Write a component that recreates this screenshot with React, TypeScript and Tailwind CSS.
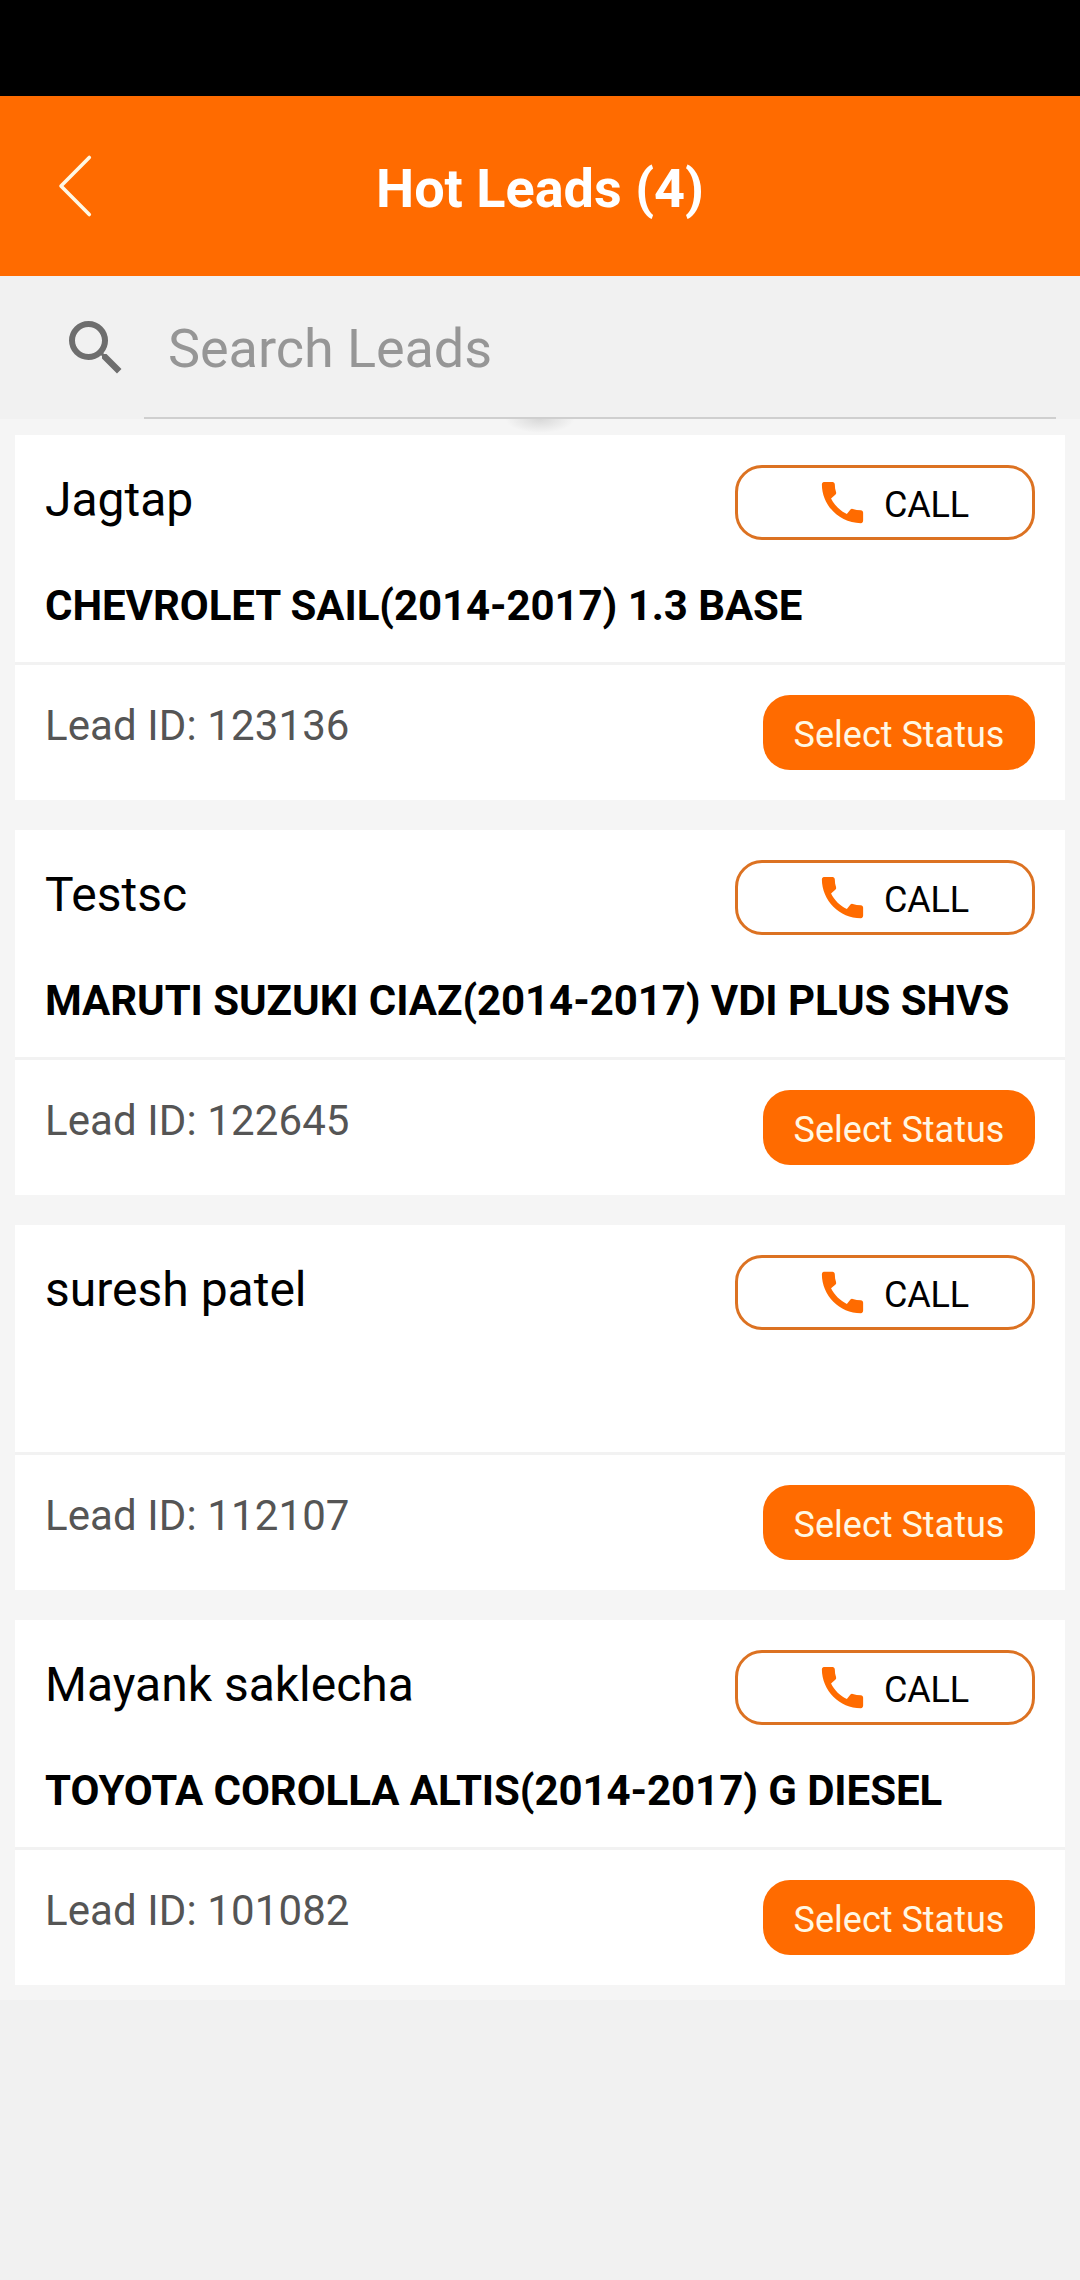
import { MdCall, MdSearch } from "react-icons/md";

interface ILead {
    id: number;
    nome: string;
    carro: string;
}

const leads: ILead[] = [
    { id: 123136, nome: "Jagtap", carro: "CHEVROLET SAIL(2014-2017) 1.3 BASE" },
    { id: 122645, nome: "Testsc", carro: "MARUTI SUZUKI CIAZ(2014-2017) VDI PLUS SHVS" },
    { id: 112107, nome: "suresh patel", carro: "" },
    { id: 101082, nome: "Mayank saklecha", carro: "TOYOTA COROLLA ALTIS(2014-2017) G DIESEL" },
];

function Header({ total }: { total: number }) {
    return (
        <header className="grid h-[180px] grid-cols-[150px_1fr_150px] items-center bg-[#ff6b00] text-white">
            <button className="pl-[54px]" aria-label="Back">
                <svg width="42" height="66" viewBox="0 0 42 66" fill="none">
                    <path
                        d="M35.3 4.5L7 33l28.3 28.5"
                        stroke="#fff8e4"
                        strokeWidth="3.6"
                        strokeLinecap="round"
                        strokeLinejoin="round"
                    />
                </svg>
            </button>
            <h1 className="pt-1.5 text-center text-[54px] leading-[64px] font-bold">
                Hot Leads ({total})
            </h1>
        </header>
    );
}

function SearchBar() {
    return (
        <div className="flex h-[143px] pr-6 pl-[60px]">
            <MdSearch className="mt-9 size-[72px] shrink-0 text-[#6e6e6e]" />
            <div className="ml-3 flex flex-1 border-b-2 border-[#cfcfcf] pt-[41px] pl-6">
                <span className="text-[54px] leading-[64px] tracking-[-0.05px] text-[#969696]">
                    Search Leads
                </span>
            </div>
        </div>
    );
}

function LeadCard({ id, nome, carro }: ILead) {
    return (
        <section className="h-[365px] bg-white">
            <div className="h-[230px] border-b-3 border-[#f2f2f2] px-[30px] pt-[30px]">
                <div className="flex h-[75px] justify-between">
                    <h2 className="pt-[7px] text-[48px] leading-[56px] text-black">{nome}</h2>
                    <button className="flex w-[300px] rounded-[27px] border-3 border-[#dc7222] pl-[77px] text-black">
                        <MdCall className="mt-[7px] size-[55px] text-[#ff6b00]" />
                        <span className="mt-4 ml-[14px] text-[36px] leading-[42px] tracking-[-0.2px]">
                            CALL
                        </span>
                    </button>
                </div>
                <p className="pt-[41px] text-[42px] leading-[50px] font-bold tracking-[-0.07px] whitespace-nowrap text-black">
                    {carro}
                </p>
            </div>
            <div className="flex justify-between px-[30px] pt-[30px]">
                <p className="pt-[6px] text-[42px] leading-[50px] tracking-[0.1px] text-[#555]">
                    Lead ID: {id}
                </p>
                <button className="h-[75px] w-[272px] rounded-[27px] bg-[#ff6b00] pt-1 text-[36px] leading-[42px] text-[#fff8e4]">
                    Select Status
                </button>
            </div>
        </section>
    );
}

function App() {
    return (
        <main className="h-[2280px] w-[1080px] overflow-hidden bg-[#f1f1f1] font-[Roboto,sans-serif]">
            <div className="h-24 bg-black" />
            <Header total={leads.length} />
            <SearchBar />
            <div className="relative flex flex-col gap-[30px] bg-[#f5f5f5] px-[15px] pt-4 pb-[15px]">
                {/* shadow of the pull to refresh circle */}
                <div className="absolute top-0 left-[505px] h-[14px] w-[70px] bg-[radial-gradient(ellipse_at_top,#d8d8d8,#f5f5f5_70%)]" />
                {leads.map((lead) => (
                    <LeadCard key={lead.id} {...lead} />
                ))}
            </div>
        </main>
    );
}

export default App;
